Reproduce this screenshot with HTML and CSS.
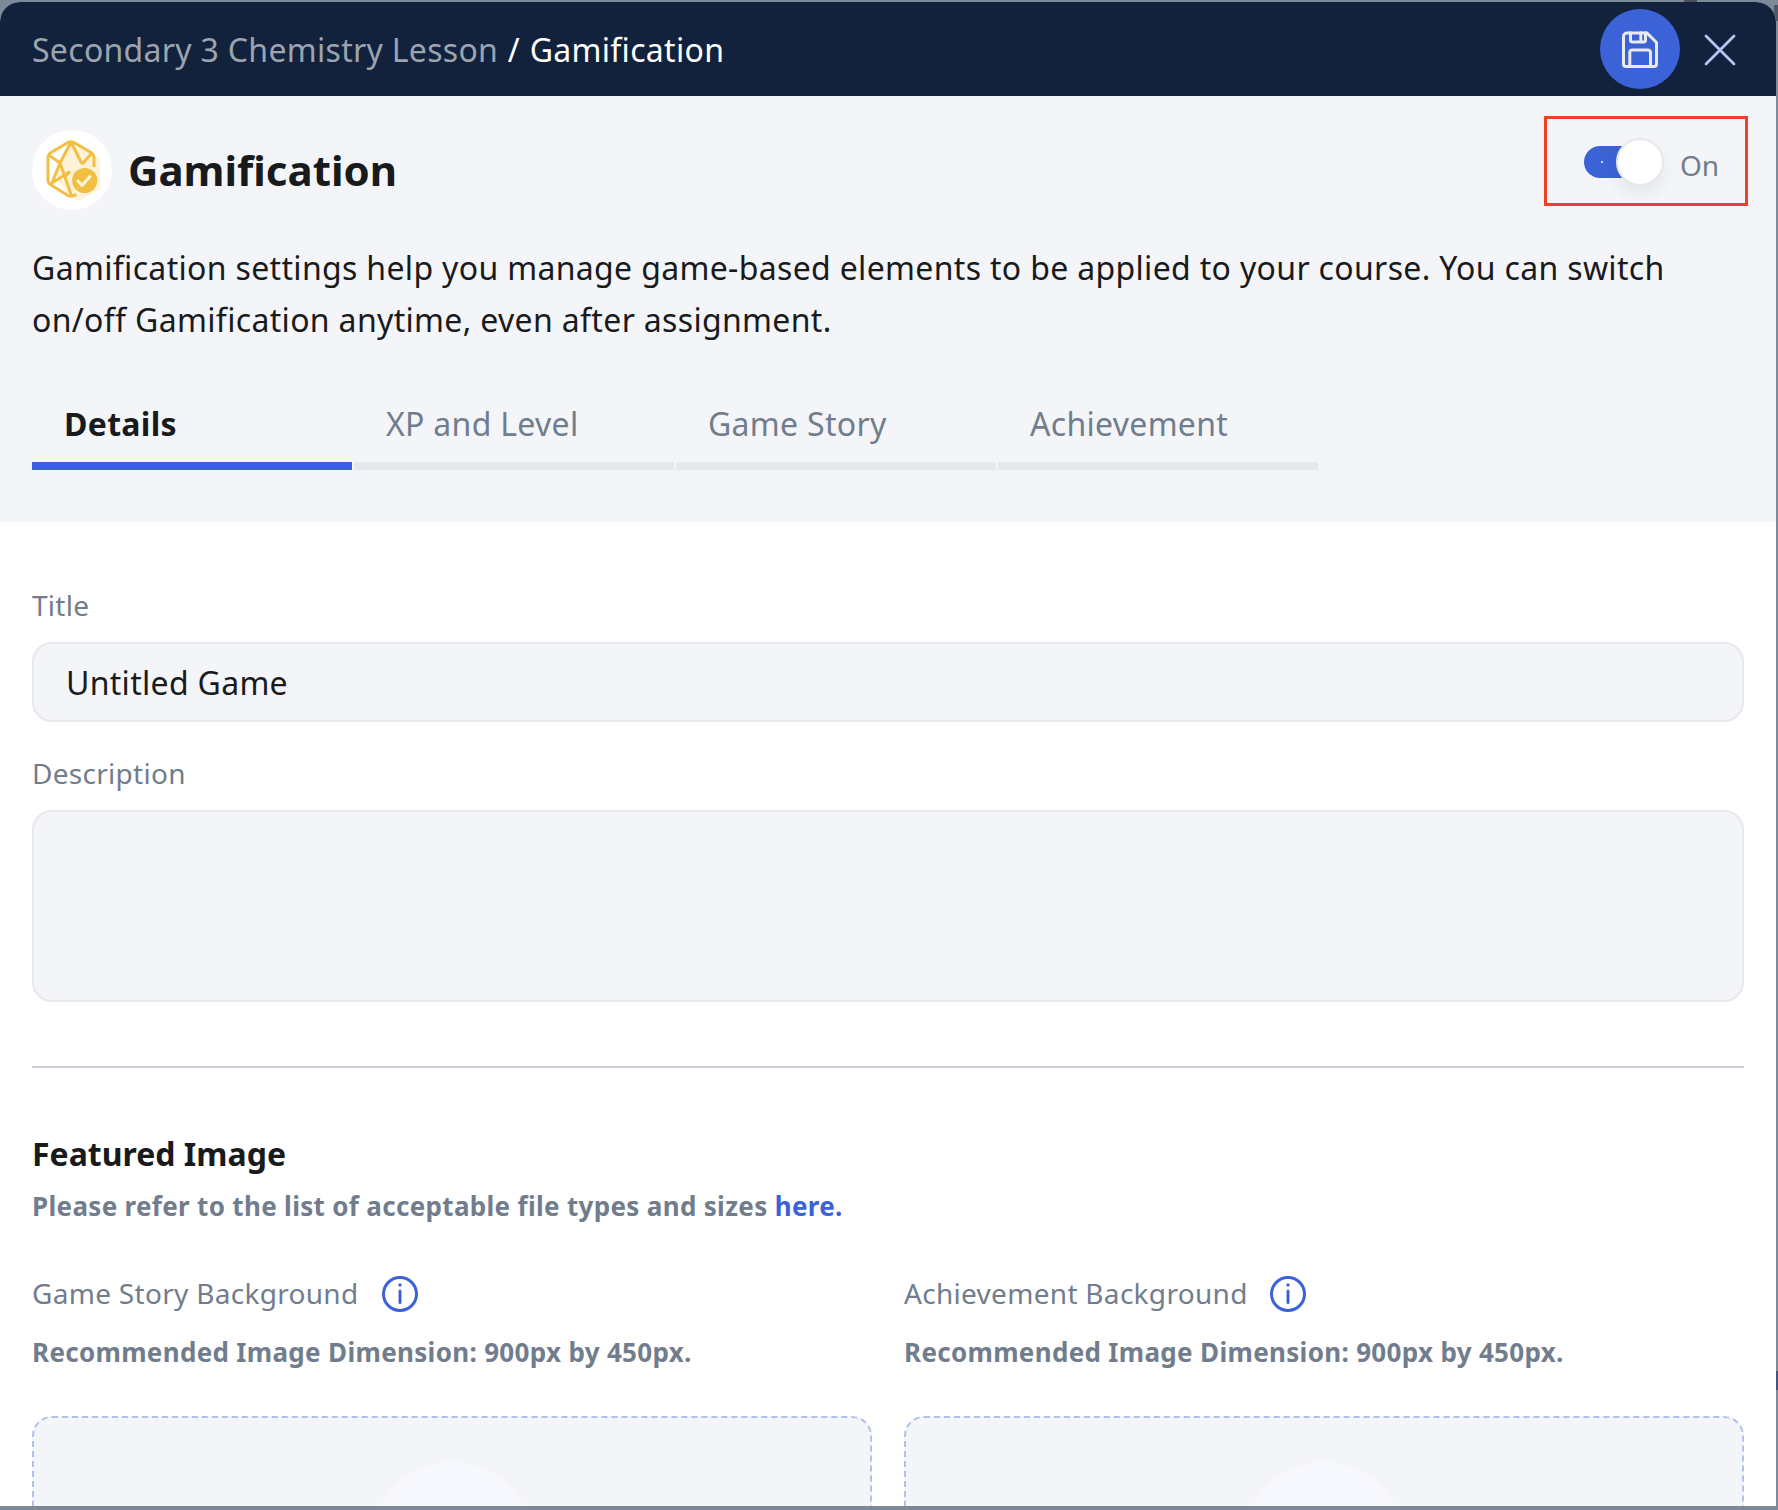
FILE: index.html
```html
<!DOCTYPE html>
<html lang="en">
<head>
<meta charset="utf-8">
<title>Gamification</title>
<link rel="stylesheet" href="styles.css">
</head>
<body>
<main class="dialog">
  <header class="topbar">
    <nav class="crumbs"><span class="crumb-parent">Secondary 3 Chemistry Lesson</span> <span class="slash">/</span> <span>Gamification</span></nav>
    <div class="actions">
      <button class="save" aria-label="Save">
        <svg width="36" height="37" viewBox="0 0 36 37" fill="none" stroke="#e8eaee" stroke-width="3" stroke-linejoin="round">
          <path d="M5 2H25L34.500 11.500V33a2.500 2.500 0 0 1-2.500 2.500H4a2.500 2.500 0 0 1-2.500-2.500V5.500A3.500 3.500 0 0 1 5 2Z"/>
          <path d="M8.500 .5V9a2 2 0 0 0 2 2H21.500a2 2 0 0 0 2-2V.5M18.800 .5V10M7.800 35V21.500a2.500 2.500 0 0 1 2.500-2.500H26a2.500 2.500 0 0 1 2.500 2.500V35"/>
        </svg>
      </button>
      <button class="close" aria-label="Close">
        <svg width="32" height="32" viewBox="0 0 32 32" fill="none" stroke="#b7c5f2" stroke-width="2.800" stroke-linecap="round"><path d="M2 2L30 30M30 2L2 30"/></svg>
      </button>
    </div>
  </header>
  <section class="hero">
    <div class="hero-head">
      <div class="badge">
        <svg width="80" height="80" viewBox="0 0 80 80" fill="none">
          <path d="M39 12L62 25L68 28V59L46 71L38 66L25 50V27Z" fill="#fef3d9"/>
          <path d="M17 26L37 13L28 32ZM17 30L27 34L19 53Z" fill="#fff"/>
          <g stroke="#f2bf42" stroke-width="3" stroke-linejoin="round">
            <path d="M62 37V28Q62 24.500 59 22.500L42 12.500Q39 11 36 12.500L19 22.500Q16 24.500 16 28V50Q16 53 19 55L36 65.500Q39 67 42 65.500L44.500 64.300"/>
            <path d="M39 12L49 32Q50.500 34.500 52 32L59.700 23.300M39 12L28 33L39.500 65.500M17.500 25.500L28 33L20 53L38 41.500M33 47L38 41.500"/>
          </g>
          <circle cx="52.700" cy="50.500" r="12.600" fill="#f2bf42"/>
          <path d="M46 51L50 55.500L58 46.500" stroke="#fff5dc" stroke-width="3" stroke-linecap="round" stroke-linejoin="round"/>
        </svg>
      </div>
      <h1 class="title">Gamification</h1>
      <div class="switch-box">
        <span class="track"><i class="tick"></i><span class="knob"></span></span>
        <span class="switch-label">On</span>
      </div>
    </div>
    <p class="intro">Gamification settings help you manage game-based elements to be applied to your course. You can switch<br>on/off Gamification anytime, even after assignment.</p>
    <div class="tabs">
      <div class="tab active"><span>Details</span></div>
      <div class="tab"><span>XP and Level</span></div>
      <div class="tab"><span>Game Story</span></div>
      <div class="tab"><span>Achievement</span></div>
    </div>
  </section>
  <section class="form">
    <div class="label">Title</div>
    <div class="field title-field"><span>Untitled Game</span></div>
    <div class="label second">Description</div>
    <div class="field area"></div>
    <hr class="rule">
    <h2 class="section-title">Featured Image</h2>
    <p class="note files">Please refer to the list of acceptable file types and sizes <a class="link">here.</a></p>
    <div class="uploads">
      <div class="upload">
        <div class="upload-label"><span>Game Story Background</span>
          <svg class="info" width="36" height="36" viewBox="0 0 36 36"><circle cx="18" cy="18" r="16.500" fill="none" stroke="#3b62d6" stroke-width="3"/><circle cx="18" cy="9" r="1.700" fill="#3b62d6"/><path d="M18 15V26.500" stroke="#3b62d6" stroke-width="3" stroke-linecap="round"/></svg>
        </div>
        <p class="note">Recommended Image Dimension: 900px by 450px.</p>
        <div class="drop"><div class="disc"></div></div>
      </div>
      <div class="upload">
        <div class="upload-label achievement"><span>Achievement Background</span>
          <svg class="info" width="36" height="36" viewBox="0 0 36 36"><circle cx="18" cy="18" r="16.500" fill="none" stroke="#3b62d6" stroke-width="3"/><circle cx="18" cy="9" r="1.700" fill="#3b62d6"/><path d="M18 15V26.500" stroke="#3b62d6" stroke-width="3" stroke-linecap="round"/></svg>
        </div>
        <p class="note">Recommended Image Dimension: 900px by 450px.</p>
        <div class="drop"><div class="disc"></div></div>
      </div>
    </div>
  </section>
</main>
</body>
</html>
```
FILE: styles.css
```css
* { box-sizing: border-box; margin: 0; padding: 0; }
body {
  width: 1778px;
  height: 1510px;
  overflow: hidden;
  padding-top: 2px;
  /* dimmed page that shows past the dialog's edges */
  background:
    linear-gradient(#4a5260, #4a5260) 1684px 0 / 13px 2px no-repeat,
    linear-gradient(#4f5866, #4f5866) 1774px 5px / 4px 16px no-repeat,
    linear-gradient(#41557f, #41557f) 1776px 1371px / 2px 19px no-repeat,
    #7d8999;
  font-family: "Noto Sans", sans-serif;
  color: #191a1c;
}
button { border: 0; background: none; display: flex; align-items: center; justify-content: center; }
.dialog { width: 1776px; height: 1504px; border-radius: 20px 20px 0 0; overflow: hidden; background: #fff; }
.topbar { height: 94px; padding: 0 32px; display: flex; align-items: center; justify-content: space-between; background: #12223d; }
.crumbs { padding-top: 1px; font-size: 32px; letter-spacing: .3px; color: #fff; line-height: 44px; }
.crumb-parent { color: #9ca4af; }
.slash { margin: 0 1px; }
.actions { display: flex; align-items: center; gap: 16px; }
.save { width: 80px; height: 80px; border-radius: 50%; background: #3b62d6; }
.close { width: 48px; height: 48px; padding-top: 2px; }
.hero { height: 426px; padding: 20px 28px 0 32px; background: #f4f5f9; }
.hero-head { display: flex; align-items: flex-start; height: 94px; }
.badge { width: 80px; height: 80px; margin-top: 14px; border-radius: 50%; background: #fff; }
.title { margin: 24px 0 0 16px; font-size: 42px; line-height: 60px; font-weight: 700; }
.switch-box { width: 204px; height: 90px; margin-left: auto; border: 3px solid #ee4227; display: flex; padding-left: 37px; }
.track { width: 80px; height: 32px; margin-top: 27px; border-radius: 16px; display: flex; align-items: center; background: linear-gradient(90deg, #3b62d6 56px, #e7e8ec 56px); }
.tick { width: 2px; height: 2px; margin-left: 17px; background: #cbd6f7; }
.knob { flex: none; width: 48px; height: 48px; margin-left: 13px; border-radius: 50%; border: 2px solid #e7e8ec; background: #fff; box-shadow: 0 8px 16px rgba(28, 51, 84, .07); }
.switch-label { margin: 27px 0 0 16px; font-size: 28px; line-height: 38px; color: #717d8d; }
.intro { margin-top: 32px; font-size: 32px; letter-spacing: .33px; line-height: 52px; white-space: nowrap; }
.tabs { display: flex; gap: 2px; margin-top: 56px; }
.tab { width: 320px; height: 68px; padding-left: 32px; border-bottom: 8px solid #e7e8ec; font-size: 32px; letter-spacing: .3px; line-height: 44px; color: #717d8d; }
.tab.active { border-color: #3b62d6; color: #191a1c; font-weight: 700; }
.form { padding: 64px 32px 0; }
.label { height: 56px; font-size: 28px; letter-spacing: .28px; line-height: 38px; color: #717d8d; }
.second { margin-top: 32px; }
.field { border: 2px solid #e7e8ec; border-radius: 20px; background: #f4f5f9; }
.title-field { height: 80px; padding: 0 32px; font-size: 32px; letter-spacing: .3px; line-height: 77px; }
.area { height: 192px; }
.rule { height: 2px; margin-top: 64px; border: 0; background: #ccd1d9; }
.section-title { margin-top: 64px; font-size: 32px; line-height: 44px; }
.note { font-size: 26px; letter-spacing: .32px; line-height: 36px; font-weight: 700; color: #717d8d; white-space: nowrap; }
.files { margin-top: 12px; }
.link { color: #3b62d6; }
.uploads { display: grid; grid-template-columns: 840px 840px; gap: 32px; margin-top: 46px; }
.upload-label { display: flex; align-items: center; gap: 24px; height: 48px; margin-bottom: 16px; font-size: 28px; letter-spacing: .3px; color: #717d8d; }
.upload-label.achievement { gap: 22px; }
.upload-label span { padding-bottom: 2px; }
.drop { height: 320px; margin-top: 46px; padding-top: 44px; border: 2px dashed #b1c1ef; border-radius: 20px; background: #f4f5f9; }
.disc { width: 160px; height: 160px; margin: 0 auto; border-radius: 50%; background: #f7f8fd; }
```
